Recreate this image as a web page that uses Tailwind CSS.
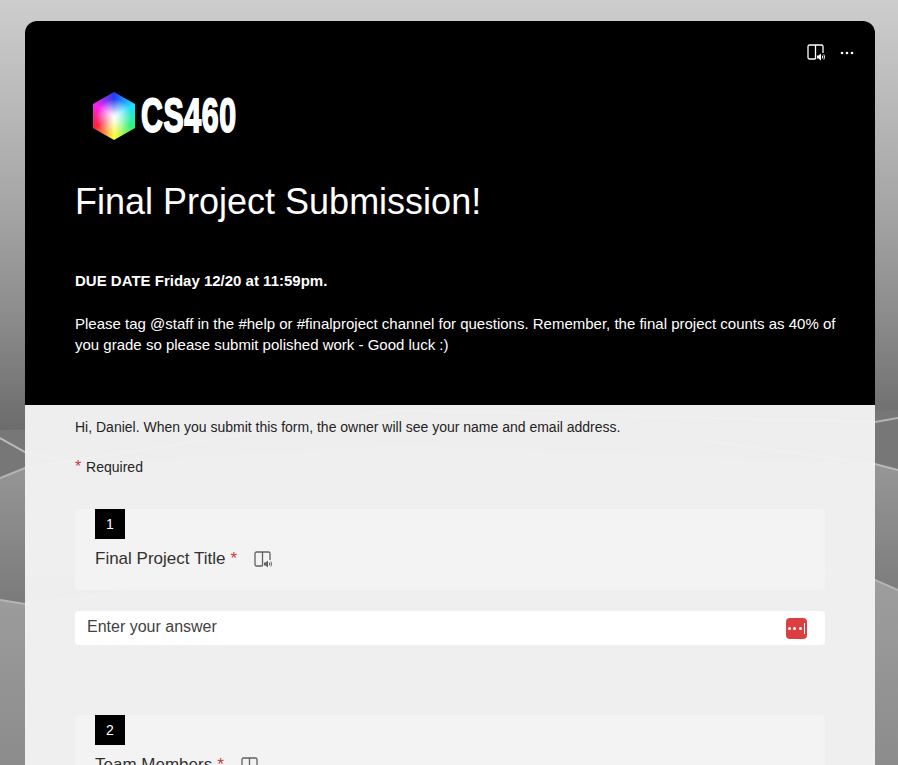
<!DOCTYPE html>
<html><head><meta charset="utf-8"><script src="https://cdn.jsdelivr.net/npm/@tailwindcss/browser@4"></script></head>
<body class="m-0 h-[765px] w-[898px] overflow-hidden relative bg-[#999] font-['Liberation_Sans',Arial,sans-serif]">
<svg class="absolute inset-0" width="898" height="765" viewBox="0 0 898 765">
<defs>
<linearGradient id="a" x1="0" y1="0" x2="0" y2="1"><stop offset="0" stop-color="#cdcdcd"/><stop offset=".45" stop-color="#a6a6a6"/><stop offset=".7" stop-color="#8c8c8c"/><stop offset="1" stop-color="#666"/></linearGradient>
<linearGradient id="b" x1="0" y1="0" x2="0" y2="1"><stop offset="0" stop-color="#9a9a9a"/><stop offset="1" stop-color="#7a7a7a"/></linearGradient>
<linearGradient id="c" x1="0" y1="0" x2="0" y2="1"><stop offset="0" stop-color="#a2a2a2"/><stop offset="1" stop-color="#8c8c8c"/></linearGradient>
</defs>
<rect width="898" height="450" fill="url(#a)"/>
<polygon points="0,430 898,410 898,480 0,490" fill="#777"/>
<polygon points="0,478 25,468 400,445 875,464 898,470 898,590 875,580 600,530 300,570 25,604 0,600" fill="url(#b)"/>
<polygon points="0,600 25,604 300,570 600,530 875,580 898,590 898,765 0,765" fill="url(#c)"/>
<polygon points="0,0 898,0 898,418 875,422 400,410 250,440 25,452 0,438" fill="none"/>
<polyline points="0,438 25,452 250,500" fill="none" stroke="#bbb" stroke-width="2"/>
<polyline points="0,478 25,468 400,410 875,422 898,418" fill="none" stroke="#b4b4b4" stroke-width="2"/>
<polyline points="700,440 875,464 898,470" fill="none" stroke="#b8b8b8" stroke-width="2"/>
<polyline points="0,600 25,604 300,570 600,530 875,580 898,590" fill="none" stroke="#b4b4b4" stroke-width="2"/>
</svg>
<main class="relative ml-[25px] mt-[21px] w-[850px] h-[760px] inline-block align-top rounded-t-[12px] overflow-hidden bg-[#f1f1f1]/[.98] text-[#242424]">
<header class="relative h-[384px] bg-black text-white">
  <div class="absolute right-[21px] top-[23px] flex items-center gap-[15px]">
    <svg width="18" height="18" viewBox="0 0 18 18" fill="none" stroke="#fff" stroke-width="1.3"><path d="M8.500 15H2.500a1.500 1.500 0 0 1-1.500-1.500V2.500A1.500 1.500 0 0 1 2.500 1h12A1.500 1.500 0 0 1 16 2.500V9M8.500 1V15"/><path d="M10 11.500h1.500L14 9.500v7l-2.500-2H10z" fill="#fff" stroke="none"/><path d="M15.300 11.500c.5.9.5 2.100 0 3M16.800 10.500c.8 1.500.8 3.500 0 5" stroke-width="1"/></svg>
    <svg width="14" height="4" viewBox="0 0 14 4" fill="#fff"><circle cx="2" cy="2" r="1.300"/><circle cx="7" cy="2" r="1.300"/><circle cx="12" cy="2" r="1.300"/></svg>
  </div>
  <div class="flex h-[119px] items-center pl-[68px] pt-[71px]">
    <div class="h-[48px] w-[42px] [clip-path:polygon(50%_0,100%_25%,100%_75%,50%_100%,0_75%,0_25%)] bg-[radial-gradient(circle_at_50%_52%,#fff_0,#ffffffcc_14%,transparent_55%),conic-gradient(from_0deg,#2040f0,#20e0ff_60deg,#30f080_120deg,#ffff40_180deg,#ff2040_240deg,#ff20f0_300deg,#2040f0)]"></div>
    <span class="ml-[6px] inline-block origin-left scale-x-[.63] font-['Liberation_Sans_Narrow','Liberation_Sans',sans-serif] text-[48px] leading-[48px] font-bold tracking-[1px] [-webkit-text-stroke:2px_white]">CS460</span>
  </div>
  <h1 class="mt-[38px] pl-[50px] text-[36px] leading-[48px] font-normal">Final Project Submission!</h1>
  <div class="mt-[44px] pr-[38px] pl-[50px] text-[15px] leading-[21px]">
    <p class="font-bold">DUE DATE Friday 12/20 at 11:59pm.</p>
    <p class="mt-[22px]">Please tag @staff in the #help or #finalproject channel for questions. Remember, the final project counts as 40% of you grade so please submit polished work - Good luck :)</p>
  </div>
</header>
<section class="px-[50px]">
  <p class="pt-[12px] text-[14px] leading-[20px]">Hi, Daniel. When you submit this form, the owner will see your name and email address.</p>
  <p class="mt-[20px] text-[14px] leading-[20px]"><span class="mr-[1px] text-[16px] text-[#c43e3e]">*</span> Required</p>
  <div class="mt-[32px] h-[81px] rounded-[4px] bg-[#f3f3f3] pl-[20px]">
    <div class="flex h-[30px] w-[30px] items-center justify-center bg-black text-[14px] text-white">1</div>
    <div class="mt-[9px] flex items-center text-[17px] leading-[22px] text-[#323130]">Final Project Title<span class="ml-[5px] text-[#c43e3e]">*</span>
      <svg class="mt-[2px] ml-[17px]" width="18" height="18" viewBox="0 0 18 18" fill="none" stroke="#616161" stroke-width="1.300"><path d="M8.500 15H2.500a1.500 1.500 0 0 1-1.500-1.500V2.500A1.500 1.500 0 0 1 2.500 1h12A1.500 1.500 0 0 1 16 2.500V9M8.500 1V15"/><path d="M10 11.500h1.500L14 9.500v7l-2.500-2H10z" fill="#616161" stroke="none"/><path d="M15.300 11.500c.5.9.5 2.100 0 3M16.800 10.500c.8 1.500.8 3.500 0 5" stroke-width="1"/></svg>
    </div>
  </div>
  <div class="mt-[21px] flex h-[34px] items-center justify-between rounded-[4px] bg-white pr-[18px] pb-[2px] pl-[12px] text-[16px] text-[#424242]">
    <span>Enter your answer</span>
    <div class="mt-[2px] flex h-[21px] w-[21px] items-center justify-center gap-[2.500px] rounded-[4px] bg-[#dc3f3f]">
      <i class="block h-[3px] w-[3px] rounded-full bg-white"></i><i class="block h-[3px] w-[3px] rounded-full bg-white"></i><i class="block h-[3px] w-[3px] rounded-full bg-white"></i><i class="block h-[11px] w-px bg-white"></i>
    </div>
  </div>
  <div class="mt-[70px] h-[81px] rounded-[4px] bg-[#f3f3f3] pl-[20px]">
    <div class="flex h-[30px] w-[30px] items-center justify-center bg-black text-[14px] text-white">2</div>
    <div class="mt-[9px] flex items-center text-[17px] leading-[22px] text-[#323130]">Team Members<span class="ml-[5px] text-[#c43e3e]">*</span>
      <svg class="mt-[2px] ml-[17px]" width="18" height="18" viewBox="0 0 18 18" fill="none" stroke="#616161" stroke-width="1.300"><path d="M8.500 15H2.500a1.500 1.500 0 0 1-1.500-1.500V2.500A1.500 1.500 0 0 1 2.500 1h12A1.500 1.500 0 0 1 16 2.500V9M8.500 1V15"/><path d="M10 11.500h1.500L14 9.500v7l-2.500-2H10z" fill="#616161" stroke="none"/><path d="M15.300 11.500c.5.9.5 2.100 0 3M16.800 10.500c.8 1.500.8 3.500 0 5" stroke-width="1"/></svg>
    </div>
  </div>
</section>
</main>
</body></html>
